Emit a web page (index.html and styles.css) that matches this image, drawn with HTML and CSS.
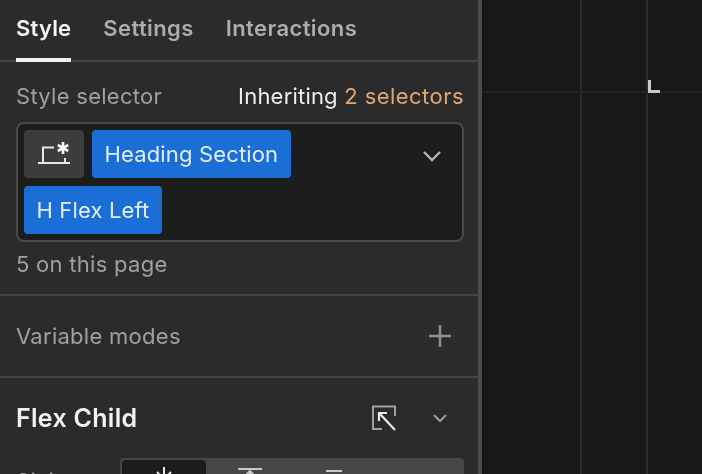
FILE: index.html
```html
<!DOCTYPE html>
<html lang="en">
<head>
  <meta charset="UTF-8" />
  <title>Style panel</title>
  <link rel="stylesheet" href="styles.css">
</head>
<body>

  <div class="panel">
    <div class="tabs">
      <div class="tab active">Style</div>
      <div class="tab">Settings</div>
      <div class="tab">Interactions</div>
    </div>

    <div class="section selector-section">
      <div class="selector-head">
        <span class="muted">Style selector</span>
        <span class="inherit">Inheriting <span class="orange">2 selectors</span></span>
      </div>

      <div class="selector-box">
        <div class="chips">
          <div class="state-btn">
            <svg width="36" height="28" viewBox="0 0 36 28" fill="none" stroke="#e8e8e8" stroke-width="2">
              <path d="M2 23H34M7 23V7.5H18M29 18V23"/>
              <path d="M27 2V14M21.8 5L32.2 11M32.2 5L21.8 11" stroke="#f4f4f4" stroke-width="2.6"/>
            </svg>
          </div>
          <div class="chip">Heading Section</div>
          <div class="chip">H Flex Left</div>
        </div>
        <svg class="box-caret" width="20" height="12" viewBox="0 0 20 12" fill="none" stroke="#b4b4b4" stroke-width="2.4">
          <path d="M2 2L10 10L18 2"/>
        </svg>
      </div>

      <div class="muted page-count">5 on this page</div>
    </div>

    <div class="section modes">
      <span class="muted">Variable modes</span>
      <svg width="24" height="24" viewBox="0 0 24 24" fill="none" stroke="#8f8f8f" stroke-width="2.4">
        <path d="M12 1V23M1 12H23"/>
      </svg>
    </div>

    <div class="flex-child">
      <div class="flex-head">
        <span class="flex-title">Flex Child</span>
        <svg class="arrow-icon" width="26" height="26" viewBox="0 0 26 26" fill="none" stroke="#a0a0a0" stroke-width="2">
          <path d="M24 11V1.5H2V24H11"/>
          <path d="M9 9L24 25M8 16V8H16" stroke="#e8e8e8" stroke-width="2.2"/>
        </svg>
        <svg class="small-caret" width="14" height="9" viewBox="0 0 14 9" fill="none" stroke="#a0a0a0" stroke-width="2">
          <path d="M1 1L7 7L13 1"/>
        </svg>
      </div>
      <div class="sizing-row">
        <span class="muted sizing-label">Sizing</span>
        <div class="segments">
          <div class="segment on">
            <svg width="18" height="18" viewBox="0 0 18 18" fill="none" stroke="#e8e8e8" stroke-width="2">
              <path d="M9 0V18M2 5L9 12L16 5"/>
            </svg>
          </div>
          <div class="segment">
            <svg width="30" height="18" viewBox="0 0 30 18" fill="none" stroke="#c8c8c8" stroke-width="2">
              <path d="M5 2H29M17 4V18"/>
              <path d="M12 9L17 4L22 9"/>
            </svg>
          </div>
          <div class="segment">
            <svg width="30" height="18" viewBox="0 0 30 18" fill="none" stroke="#c8c8c8" stroke-width="2">
              <path d="M9 4H25"/>
            </svg>
          </div>
        </div>
      </div>
    </div>
  </div>

  <div class="divider"></div>

  <div class="canvas">
    <div class="guide-col first"></div>
    <div class="guide-col second"></div>
    <div class="guide-row"></div>
    <div class="corner"></div>
  </div>

</body>
</html>
```

FILE: styles.css
```css
* { box-sizing: border-box; }

html, body {
  height: 100%;
}

body {
  margin: 0;
  display: flex;
  height: 474px;
  overflow: hidden;
  background: #171717;
  font-family: Inter, 'Liberation Sans', sans-serif;
  font-size: 22px;
  letter-spacing: 0.28px;
  color: #d8d8d8;
}

.panel {
  width: 478px;
  flex-shrink: 0;
  background: #2b2b2b;
  overflow: hidden;
  filter: blur(0.45px);
}

.divider {
  width: 4px;
  flex-shrink: 0;
  background: #4c4c4c;
}

.tabs {
  display: flex;
  gap: 32px;
  height: 62px;
  padding: 0 16px;
  border-bottom: 2px solid #434343;
}

.tab {
  height: 62px;
  padding-top: 15px;
  font-weight: 600;
  font-size: 22px;
  letter-spacing: 0.4px;
  color: #acacac;
}

.tab.active {
  color: #f6f6f6;
  letter-spacing: 0.2px;
  border-bottom: 4px solid #f0f0f0;
}

.section {
  padding: 0 14px 0 16px;
  border-bottom: 2px solid #434343;
}

.muted {
  color: #a0a0a0;
}

.selector-section {
  height: 234px;
  padding-top: 20px;
}

.selector-head {
  display: flex;
  justify-content: space-between;
  line-height: 28px;
  height: 40px;
}

.inherit {
  letter-spacing: 0.2px;
  color: #efefef;
}

.orange {
  letter-spacing: 0.45px;
  color: #dfa676;
}

.selector-box {
  display: flex;
  align-items: flex-start;
  justify-content: space-between;
  height: 120px;
  padding: 6px 20px 0 6px;
  background: #1d1d1d;
  border: 2px solid #4a4a4a;
  border-radius: 8px;
}

.chips {
  display: flex;
  flex-wrap: wrap;
  gap: 8px;
  width: 300px;
}

.state-btn {
  display: flex;
  align-items: center;
  justify-content: center;
  width: 60px;
  height: 48px;
  background: #3c3c3c;
  border-radius: 4px;
}

.chip {
  height: 48px;
  padding: 0 13px 0 12.5px;
  line-height: 48px;
  background: #1a6ed6;
  border-radius: 4px;
  letter-spacing: 0.15px;
  color: #e2eefc;
  white-space: nowrap;
}

.box-caret {
  margin-top: 20px;
}

.page-count {
  margin-top: 8px;
  line-height: 28px;
}

.modes {
  display: flex;
  justify-content: space-between;
  align-items: center;
  height: 82px;
  padding-right: 26px;
}

.flex-child {
  padding: 0 14px 0 16px;
}

.flex-head {
  display: flex;
  align-items: center;
  height: 80px;
}

.flex-title {
  flex: 1;
  font-size: 25px;
  font-weight: 600;
  letter-spacing: 0.3px;
  color: #f2f2f2;
}

.arrow-icon {
  margin-right: 36px;
}

.small-caret {
  margin-right: 17px;
}

.sizing-row {
  display: flex;
  align-items: flex-start;
  justify-content: space-between;
}

.sizing-label {
  padding-top: 10px;
}

.segments {
  display: flex;
  width: 344px;
  height: 48px;
  padding: 2px;
  background: #474747;
  border-radius: 4px;
}

.segment {
  display: flex;
  justify-content: center;
  width: 84px;
  padding-top: 7px;
}

.segment.on {
  background: #1c1c1c;
  border-radius: 4px;
}

.canvas {
  flex: 1;
  position: relative;
  filter: blur(0.45px);
}

.guide-col {
  position: absolute;
  top: 0;
  bottom: 0;
  width: 2px;
  background: #2a2a2a;
}

.guide-col.first {
  left: 98px;
}

.guide-col.second {
  left: 164px;
}

.guide-row {
  position: absolute;
  top: 91px;
  left: 0;
  right: 0;
  height: 2px;
  background: #222222;
}

.corner {
  position: absolute;
  left: 166px;
  top: 80px;
  width: 12px;
  height: 13px;
  border-left: 3px solid #c8c8c8;
  border-bottom: 3px solid #c8c8c8;
}
```
